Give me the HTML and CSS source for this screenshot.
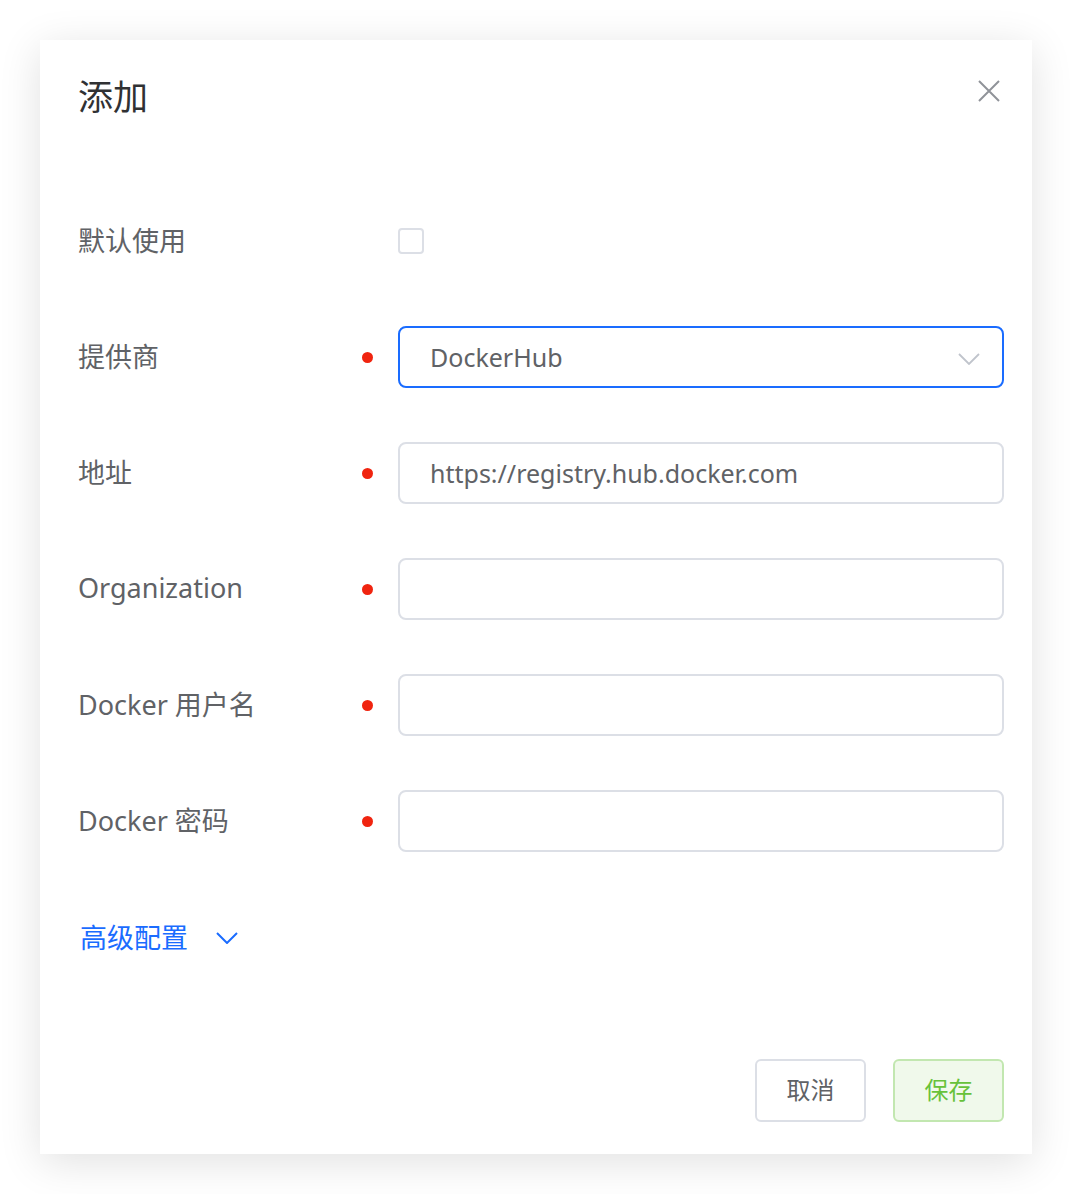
FILE: index.html
```html
<!DOCTYPE html>
<html lang="zh-CN">
<head>
<meta charset="utf-8">
<link rel="stylesheet" href="styles.css">
</head>
<body>
<div class="dialog">
  <div class="dialog-header">
    <h2 class="dialog-title">添加</h2>
    <button class="close-btn" aria-label="close">
      <svg width="22" height="22" viewBox="0 0 22 22"><path d="M1 1L21 21M21 1L1 21" stroke="#909399" stroke-width="2" fill="none"/></svg>
    </button>
  </div>
  <div class="dialog-body">
    <div class="form-row">
      <div class="label">默认使用</div>
      <div class="control"><span class="checkbox"></span></div>
    </div>
    <div class="form-row">
      <div class="label">提供商<span class="req"></span></div>
      <div class="control">
        <div class="input select">
          <span>DockerHub</span>
          <svg class="chev" width="22" height="12" viewBox="0 0 22 12"><path d="M1 1L11 11L21 1" stroke="#c0c4cc" stroke-width="1.8" fill="none"/></svg>
        </div>
      </div>
    </div>
    <div class="form-row">
      <div class="label">地址<span class="req"></span></div>
      <div class="control"><div class="input">https://registry.hub.docker.com</div></div>
    </div>
    <div class="form-row">
      <div class="label">Organization<span class="req"></span></div>
      <div class="control"><div class="input"></div></div>
    </div>
    <div class="form-row">
      <div class="label">Docker 用户名<span class="req"></span></div>
      <div class="control"><div class="input"></div></div>
    </div>
    <div class="form-row">
      <div class="label">Docker 密码<span class="req"></span></div>
      <div class="control"><div class="input"></div></div>
    </div>
    <div class="advanced">
      <span>高级配置</span>
      <svg width="22" height="12" viewBox="0 0 22 12"><path d="M1 1L11 11L21 1" stroke="#1a6cff" stroke-width="2" fill="none"/></svg>
    </div>
  </div>
  <div class="dialog-footer">
    <button class="btn btn-cancel">取消</button>
    <button class="btn btn-save">保存</button>
  </div>
</div>
</body>
</html>
```

FILE: styles.css
```css
html, body {
  margin: 0;
  padding: 0;
  background: #ffffff;
}
body {
  padding: 40px;
  font-family: "Noto Sans", "Noto Sans CJK SC", sans-serif;
  color: #606266;
}
.dialog {
  width: 992px;
  height: 1114px;
  box-sizing: border-box;
  background: #fff;
  box-shadow: 0 8px 40px rgba(0, 0, 0, 0.12);
  display: flex;
  flex-direction: column;
}
.dialog-header {
  display: flex;
  justify-content: space-between;
  align-items: flex-start;
  padding: 33px 32px 0 38px;
}
.dialog-title {
  margin: 0;
  font-size: 35px;
  font-weight: 400;
  line-height: 44px;
  color: #303133;
  font-family: "Noto Sans CJK SC", sans-serif;
}
.close-btn {
  border: 0;
  background: none;
  padding: 0;
  width: 22px;
  height: 22px;
  margin-top: 7px;
  cursor: pointer;
}
.dialog-body {
  padding: 93px 28px 0 38px;
  flex: 1;
}
.form-row {
  display: flex;
  align-items: center;
  height: 62px;
  margin-bottom: 54px;
}
.label {
  width: 320px;
  flex-shrink: 0;
  display: flex;
  align-items: center;
  justify-content: space-between;
  padding-right: 25px;
  padding-bottom: 3px;
  box-sizing: border-box;
  font-size: 27px;
  color: #606266;
}
.req {
  width: 11px;
  height: 11px;
  border-radius: 50%;
  background: #f0240f;
  margin-top: 3px;
}
.control {
  flex: 1;
  display: flex;
  align-items: center;
}
.checkbox {
  width: 26px;
  height: 26px;
  box-sizing: border-box;
  border: 2px solid #dcdfe6;
  border-radius: 4px;
}
.input {
  flex: 1;
  height: 62px;
  box-sizing: border-box;
  border: 2px solid #dcdfe6;
  border-radius: 8px;
  padding: 0 30px;
  display: flex;
  align-items: center;
  font-size: 25px;
  color: #606266;
}
.select {
  border-color: #1a6cff;
  justify-content: space-between;
  padding-right: 22px;
}
.chev {
  margin-top: 4px;
}
.advanced {
  display: flex;
  align-items: center;
  gap: 28px;
  margin-top: 65px;
  padding-left: 2px;
  color: #1a6cff;
  font-size: 27px;
  font-family: "Noto Sans CJK SC", sans-serif;
}
.advanced span {
  margin-bottom: 3px;
}
.dialog-footer {
  display: flex;
  justify-content: flex-end;
  gap: 27px;
  padding: 0 28px 32px 0;
}
.btn {
  width: 111px;
  height: 63px;
  box-sizing: border-box;
  border-radius: 6px;
  font-size: 24px;
  padding: 0 0 4px;
  font-family: "Noto Sans CJK SC", sans-serif;
  cursor: pointer;
}
.btn-cancel {
  background: #fff;
  border: 2px solid #dcdfe6;
  color: #606266;
}
.btn-save {
  background: #f0f9eb;
  border: 2px solid #c2e7b0;
  color: #67c23a;
}
```
